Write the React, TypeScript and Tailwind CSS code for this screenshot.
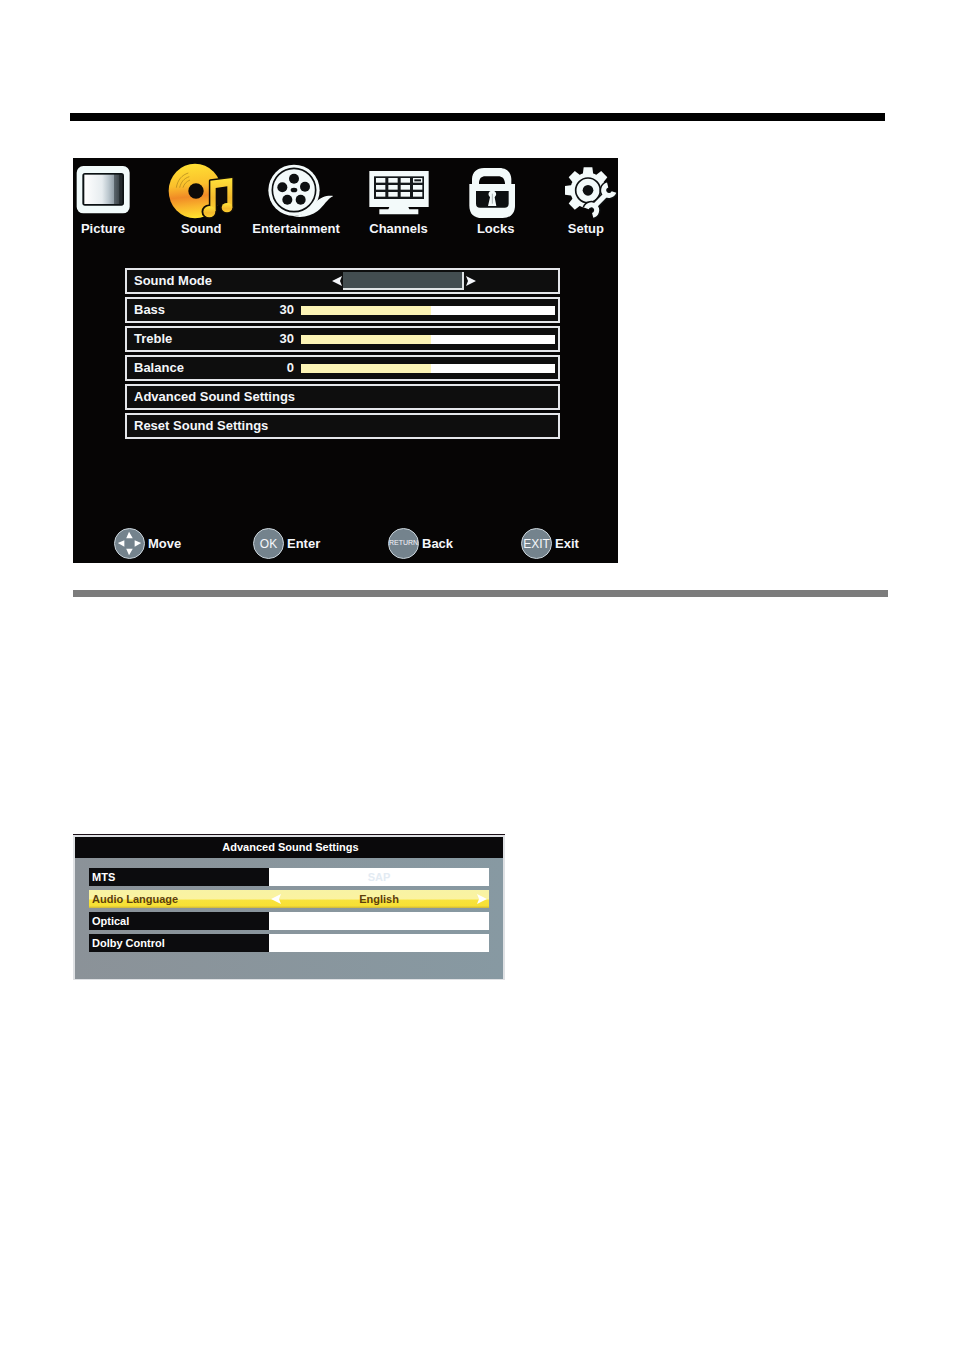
import { useState, type ReactNode } from 'react';

function PictureIcon() {
  return (
    <svg viewBox="18 24 162 168" className="h-14 w-[54px]" aria-hidden="true">
      <defs>
        <linearGradient id="screen" x1="0" x2="1" y1="0" y2="0">
          <stop offset="0" stopColor="#ffffff" />
          <stop offset="0.5" stopColor="#e6ecef" />
          <stop offset="0.68" stopColor="#bcc8cf" />
          <stop offset="0.84" stopColor="#93a0a8" />
          <stop offset="0.85" stopColor="#59646a" />
          <stop offset="1" stopColor="#3b4347" />
        </linearGradient>
      </defs>
      <rect x="20" y="33" width="159" height="142" rx="20" fill="#f1fbfb" />
      <rect x="37" y="54" width="125" height="98" rx="8" fill="#0b1214" />
      <rect x="43" y="59" width="106" height="88" fill="url(#screen)" />
      <rect x="149" y="59" width="8" height="88" fill="#20282b" />
    </svg>
  );
}

function SoundIcon() {
  return (
    <svg viewBox="297 24 198 168" className="h-14 w-[66px]" aria-hidden="true">
      <defs>
        <linearGradient id="disc" x1="0.2" x2="0.3" y1="0" y2="1">
          <stop offset="0" stopColor="#ffe234" />
          <stop offset="0.4" stopColor="#fbc02c" />
          <stop offset="0.62" stopColor="#f08a26" />
          <stop offset="0.8" stopColor="#f9b52c" />
          <stop offset="1" stopColor="#ffe02e" />
        </linearGradient>
        <linearGradient id="note" x1="0" x2="0" y1="0" y2="1">
          <stop offset="0" stopColor="#ffe43a" />
          <stop offset="0.6" stopColor="#f4b92c" />
          <stop offset="1" stopColor="#fcd02e" />
        </linearGradient>
      </defs>
      <ellipse cx="378" cy="108" rx="79" ry="82" fill="url(#disc)" />
      <g fill="none" stroke="#a8801c" strokeWidth="2">
        <path d="M322 98C326 74 339 60 358 54" />
        <path d="M332 98C336 81 345 70 361 65" />
        <path d="M342 98C345 88 351 80 363 75" />
      </g>
      <circle cx="381" cy="108" r="23" fill="#0d0a08" />
      <g stroke="#120d06" strokeWidth="9" strokeLinejoin="round">
        <path d="M424 77L490 69V158H478V92L440 97V168H424Z" />
        <ellipse cx="420" cy="170" rx="18" ry="17" />
        <ellipse cx="474" cy="158" rx="17" ry="14" />
      </g>
      <path d="M440 97L478 92V146L440 152Z" fill="#0d0a08" />
      <g fill="url(#note)">
        <path d="M424 77L490 69V158H475V94L440 99V168H424Z" />
        <ellipse cx="421" cy="170" rx="18" ry="17" />
        <ellipse cx="474" cy="158" rx="16" ry="14" />
      </g>
    </svg>
  );
}

function ReelIcon() {
  return (
    <svg viewBox="24 24 258 168" className="h-14 w-[86px]" aria-hidden="true">
      <g fill="#f3fafa">
        <circle cx="147" cy="106" r="77" />
        <path d="M144 183C176 182 196 164 212 143C228 125 246 121 265 123C246 132 238 152 218 168C198 183 170 190 144 183Z" />
      </g>
      <circle cx="147" cy="105" r="65" fill="none" stroke="#0d1011" strokeWidth="5" />
      <g fill="#0d1011">
        <circle cx="147" cy="71" r="15" />
        <circle cx="180" cy="95" r="15" />
        <circle cx="167" cy="134" r="15" />
        <circle cx="127" cy="134" r="15" />
        <circle cx="112" cy="97" r="15" />
        <ellipse cx="147" cy="105" rx="10" ry="7" />
      </g>
    </svg>
  );
}

function ChannelsIcon() {
  return (
    <svg viewBox="369 24 180 168" className="h-14 w-15" aria-hidden="true">
      <path d="M370 48H548V156H487L490 163H517V178H400V163H427L430 156H370Z" fill="#f3fafa" />
      <rect x="384" y="64" width="150" height="68" fill="#14191b" />
      <g fill="#f3fafa">
        {[69, 90, 111].map((y) =>
          [390, 427, 464, 501].map((x) => (
            <rect key={`${x}-${y}`} x={x} y={y} width="28" height="14" />
          )),
        )}
      </g>
      <rect x="505" y="73" width="20" height="6" fill="#14191b" />
    </svg>
  );
}

function LockIcon() {
  return (
    <svg viewBox="99 24 162 168" className="h-14 w-[54px]" aria-hidden="true">
      <path
        d="M108 90V72C109 52 122 39 144 39H190C212 39 225 52 226 72V90H207V84C205 70 199 64 186 64H148C136 64 130 70 129 84V90Z"
        fill="#f3fafa"
      />
      <path d="M100 87H237V152C237 176 222 189 200 189H138C114 189 100 176 100 152Z" fill="#f3fafa" />
      <path d="M120 108H218V146C218 154 213 158 206 158H132C124 158 120 154 120 146Z" fill="#0d1011" />
      <path d="M169 107A11 11 0 0 1 176 127L181 153H156L162 127A11 11 0 0 1 169 107Z" fill="#f3fafa" />
      <path d="M169 116V146" stroke="#aab4b4" strokeWidth="3" />
    </svg>
  );
}

const wrenchPath = 'M476 153L512 116M515 90A16 16 0 1 0 534 111M470 181A16 16 0 1 0 451 160';

function SetupIcon() {
  return (
    <svg viewBox="360 24 180 168" className="h-14 w-15 overflow-visible" aria-hidden="true">
      <g fill="#f3fafa">
        <circle cx="456" cy="106" r="53" />
        {[0, 45, 225, 270, 315].map((angle) => (
          <path key={angle} d="M440 60L443 37H469L472 60Z" transform={`rotate(${angle} 456 106)`} />
        ))}
      </g>
      <circle cx="456" cy="106" r="37" fill="none" stroke="#0d1011" strokeWidth="5" />
      <circle cx="456" cy="106" r="16" fill="#0d1011" />
      <path d={wrenchPath} fill="none" stroke="#0d1011" strokeWidth="24" />
      <path d={wrenchPath} fill="none" stroke="#f3fafa" strokeWidth="15" />
    </svg>
  );
}

function Arrow({ right = false }: { right?: boolean }) {
  return (
    <svg viewBox="0 0 10 10" className={right ? 'h-[10px] w-[10px] rotate-180' : 'h-[10px] w-[10px]'} aria-hidden="true">
      <path d="M0 5L10 0L8 5L10 10Z" fill="currentColor" />
    </svg>
  );
}

function MoveGlyph() {
  return (
    <svg viewBox="0 0 31 31" className="h-full w-full" aria-hidden="true">
      <path d="M15 3L19 10H12ZM15 28L12 21H19ZM3 15L10 12V19ZM28 15L21 12V19Z" fill="#fff" />
    </svg>
  );
}

const tabs: { label: string; icon: () => ReactNode }[] = [
  { label: 'Picture', icon: PictureIcon },
  { label: 'Sound', icon: SoundIcon },
  { label: 'Entertainment', icon: ReelIcon },
  { label: 'Channels', icon: ChannelsIcon },
  { label: 'Locks', icon: LockIcon },
  { label: 'Setup', icon: SetupIcon },
];

const levels = [
  { id: 'bass', label: 'Bass', text: '30' },
  { id: 'treble', label: 'Treble', text: '30' },
  { id: 'balance', label: 'Balance', text: '0' },
];

const hints: { label: string; cap: ReactNode }[] = [
  { label: 'Move', cap: <MoveGlyph /> },
  { label: 'Enter', cap: <span className="text-[12px]">OK</span> },
  { label: 'Back', cap: <span className="text-[7px]">RETURN</span> },
  { label: 'Exit', cap: <span className="text-[12px]">EXIT</span> },
];

const rowClass = 'flex h-[26px] w-full items-center border-2 border-[#e4e6ea] bg-[#0e0e0e] pr-[3px] pl-[7px] text-left';

function SoundMenu() {
  const [active, setActive] = useState('Sound');

  return (
    <section className="ml-[3px] max-w-[545px] bg-[#060505] pt-[5px] pb-1 text-[13px] font-bold text-[#f4f6fa]">
      <nav className="grid grid-cols-[92fr_84fr_116fr_100fr_87fr_62fr] justify-items-start pl-[3px]">
        {tabs.map(({ label, icon: Icon }) => (
          <button
            key={label}
            onClick={() => setActive(label)}
            aria-pressed={active === label}
            className="flex flex-col items-center leading-5"
          >
            <Icon />
            {label}
          </button>
        ))}
      </nav>

      <div className="mt-[29px] flex flex-col gap-[3px] pr-[58px] pl-[52px]">
        <div className={rowClass}>
          <span className="w-40">Sound Mode</span>
          <div className="flex items-center gap-px pl-[38px]">
            <button aria-label="Previous sound mode">
              <Arrow />
            </button>
            <output className="h-[18px] w-[121px] border-r-2 border-b-2 border-[#dfe3e5] bg-[#434d50]" />
            <button aria-label="Next sound mode" className="pl-px">
              <Arrow right />
            </button>
          </div>
        </div>

        {levels.map(({ id, label, text }) => (
          <div key={id} className={rowClass}>
            <label htmlFor={id} className="flex w-40 justify-between">
              {label}
              <span>{text}</span>
            </label>
            <input
              id={id}
              type="range"
              defaultValue="50"
              className="ml-[7px] h-[9px] min-w-0 flex-1 appearance-none bg-[linear-gradient(to_right,#fcf4b6_51%,#ffffff_51%)] [&::-webkit-slider-thumb]:appearance-none [&::-webkit-slider-thumb]:opacity-0"
            />
          </div>
        ))}

        <button className={rowClass}>Advanced Sound Settings</button>
        <button className={rowClass}>Reset Sound Settings</button>
      </div>

      <div className="mt-[89px] grid grid-cols-[139fr_135fr_133fr_97fr] justify-items-start pl-[41px]">
        {hints.map(({ label, cap }) => (
          <button key={label} className="flex items-center gap-[3px]">
            <span className="flex h-[31px] w-[31px] items-center justify-center rounded-full border border-[#c9d3da] bg-[#74838d] font-normal">
              {cap}
            </span>
            {label}
          </button>
        ))}
      </div>
    </section>
  );
}

function AdvancedRow({ label, children }: { label: string; children?: ReactNode }) {
  return (
    <div className="flex h-[18px]">
      <span className="w-[180px] shrink-0 bg-[#0c0c0e] pl-[3px]">{label}</span>
      <output className="flex-1 bg-white text-center text-[#e3ebf3]">{children}</output>
    </div>
  );
}

function AdvancedSettings() {
  return (
    <section className="ml-[3px] max-w-[432px] border-t border-[#1c1018] text-[11px] leading-[18px] font-bold text-white">
      <div className="border-2 border-b border-[#dfe1e4] bg-linear-to-r from-[#8b9298] to-[#8799a2]">
        <h2 className="h-[21px] bg-[#0a090b] pl-[3px] text-center leading-5">Advanced Sound Settings</h2>
        <div className="flex flex-col gap-1 pt-[10px] pr-[14px] pb-[27px] pl-[14px]">
          <AdvancedRow label="MTS">SAP</AdvancedRow>
          <div className="flex h-[18px] bg-[linear-gradient(#f8f3a4_0%,#fbf3a0_50%,#f8e33c_56%,#f7e034_88%,#cdb53c_100%)] text-[#5d3f0c]">
            <span className="w-[180px] shrink-0 pl-[3px]">Audio Language</span>
            <div className="flex flex-1 items-center justify-between px-[2px]">
              <button aria-label="Previous language" className="text-white">
                <Arrow />
              </button>
              <output>English</output>
              <button aria-label="Next language" className="text-white">
                <Arrow right />
              </button>
            </div>
          </div>
          <AdvancedRow label="Optical" />
          <AdvancedRow label="Dolby Control" />
        </div>
      </div>
    </section>
  );
}

export default function App() {
  return (
    <main className="min-h-screen bg-white pt-[113px] pr-[66px] pl-[70px] font-['Liberation_Sans',Arial,sans-serif]">
      <hr className="mr-[3px] mb-[37px] h-2 border-0 bg-black" />
      <SoundMenu />
      <hr className="mt-[27px] mb-[237px] ml-[3px] h-[7px] border-0 bg-[#7c7c7c]" />
      <AdvancedSettings />
    </main>
  );
}
